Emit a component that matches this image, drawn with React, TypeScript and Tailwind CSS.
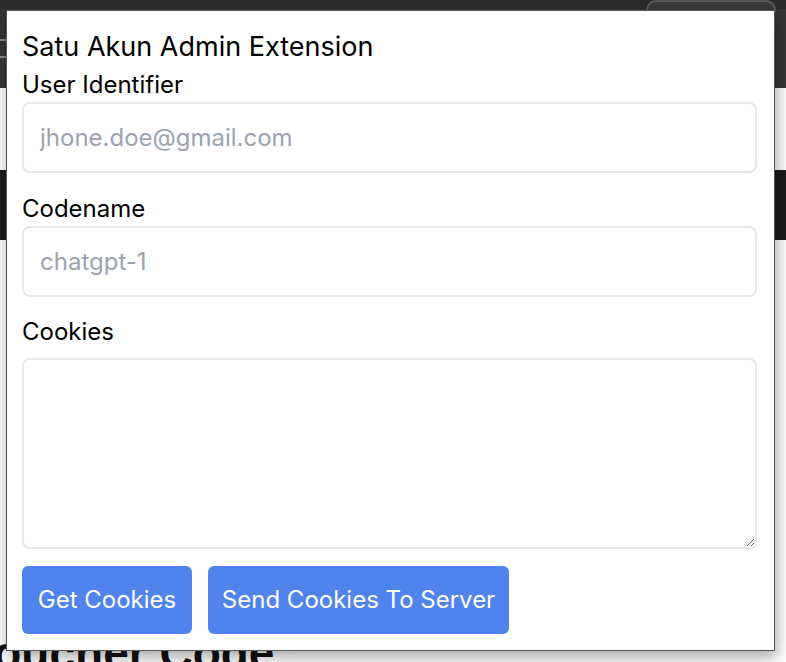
import React from "react";

const font = { fontFamily: "Inter, 'Noto Sans', sans-serif" };

const Field = ({ label, placeholder, gap }: { label: string; placeholder: string; gap: string }) => (
  <div className={`flex flex-col ${gap}`}>
    <label className="h-8 leading-8 text-[24px] text-black">{label}</label>
    <input
      placeholder={placeholder}
      className="mt-[1px] h-[71px] w-[735px] rounded-lg border-2 border-[#e5e7eb] bg-white px-4 text-[24px] text-black placeholder:text-[#9ca3af] outline-none"
    />
  </div>
);

export default function App() {
  return (
    <div className="relative w-[786px] h-[662px] overflow-hidden bg-white" style={font}>
      {/* page behind the popup */}
      <div className="flex flex-col">
        <div className="h-[88px] bg-[#363636] flex flex-col">
          <div className="h-[9px] bg-[#2b2b2b] flex justify-end items-end pr-[10px]">
            <div className="w-[130px] h-[20px] -mb-[11px] rounded-full border-2 border-[#5a5a5a] bg-[#3a3a3a]" />
          </div>
          <div className="mt-[30px] h-[2px] w-[6px] bg-[#8a8a8a]" />
          <div className="mt-[15px] h-[2px] w-[6px] bg-[#8a8a8a]" />
        </div>
        <div className="h-[82px] bg-white" />
        <div className="h-[70px] bg-[#1c1c1c]" />
        <div className="h-[390px] bg-white" />
        <div className="-ml-[34px] text-[46px] font-bold leading-none text-[#111]" style={{ fontFamily: "'Liberation Sans', Arial, sans-serif" }}>
          Voucher Code
        </div>
      </div>

      {/* extension popup */}
      <div className="absolute left-[6px] top-[10px] w-[769px] h-[641px] bg-white border border-[#555] shadow-[2px_6px_14px_rgba(0,0,0,0.35)] pl-[15px] pt-[18px] flex flex-col">
        <h1 className="h-9 leading-9 text-[27px] text-black">Satu Akun Admin Extension</h1>
        <Field label="User Identifier" placeholder="jhone.doe@gmail.com" gap="mt-[4px]" />
        <Field label="Codename" placeholder="chatgpt-1" gap="mt-[20px]" />
        <div className="mt-[19px] flex flex-col">
          <label className="h-8 leading-8 text-[24px] text-black">Cookies</label>
          <textarea className="mt-[10px] h-[191px] w-[735px] rounded-lg border-2 border-[#e5e7eb] bg-white px-4 py-3 text-[20px] outline-none" />
        </div>
        <div className="mt-[17px] flex gap-4">
          <button className="h-[68px] w-[170px] rounded-md bg-[#5083ec] text-[24px] text-white">Get Cookies</button>
          <button className="h-[68px] w-[301px] rounded-md bg-[#5083ec] text-[24px] text-white">Send Cookies To Server</button>
        </div>
      </div>
    </div>
  );
}
